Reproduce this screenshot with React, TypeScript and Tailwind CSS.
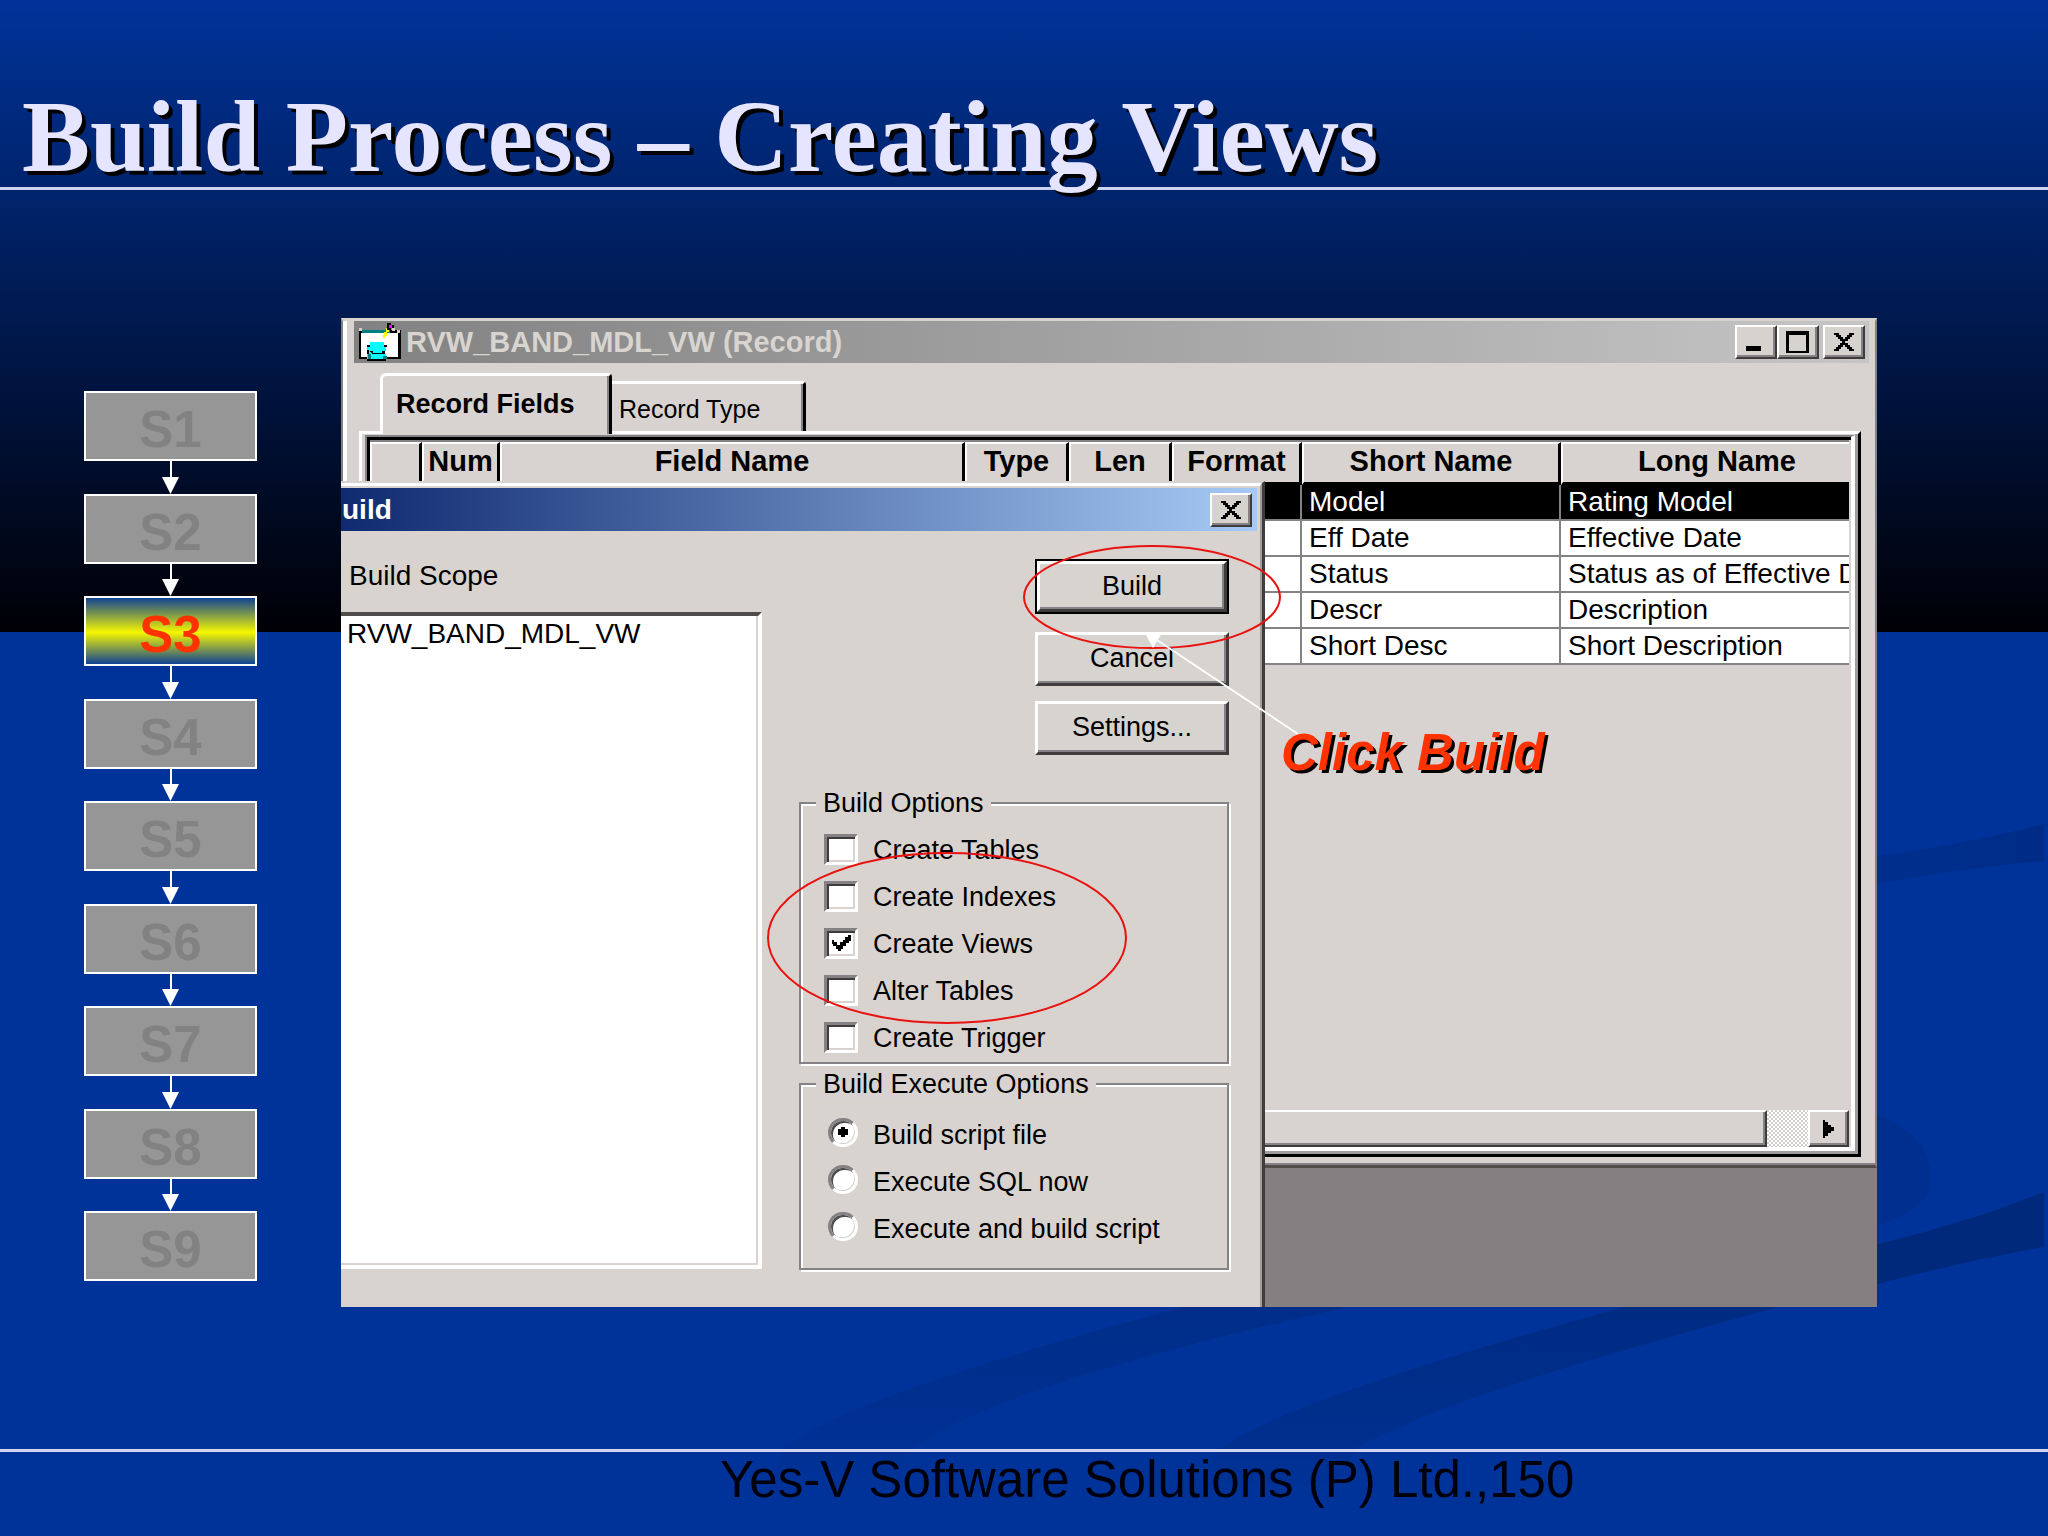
import React from "react";

const STEPS = ["S1", "S2", "S3", "S4", "S5", "S6", "S7", "S8", "S9"];
const ACTIVE = "S3";

const HEADERS = ["", "Num", "Field Name", "Type", "Len", "Format", "Short Name", "Long Name"];

const ROWS = [
  { short: "Model", long: "Rating Model", selected: true },
  { short: "Eff Date", long: "Effective Date", selected: false },
  { short: "Status", long: "Status as of Effective D", selected: false },
  { short: "Descr", long: "Description", selected: false },
  { short: "Short Desc", long: "Short Description", selected: false },
];

const BUILD_OPTIONS = [
  { label: "Create Tables", checked: false },
  { label: "Create Indexes", checked: false },
  { label: "Create Views", checked: true },
  { label: "Alter Tables", checked: false },
  { label: "Create Trigger", checked: false },
];

const EXECUTE_OPTIONS = [
  { label: "Build script file", checked: true },
  { label: "Execute SQL now", checked: false },
  { label: "Execute and build script", checked: false },
];

function Swooshes() {
  return (
    <svg className="absolute inset-0 h-full w-full" viewBox="0 0 2048 1536" preserveAspectRatio="none" aria-hidden="true">
      <defs>
        <linearGradient id="fadeA" x1="0" y1="1300" x2="0" y2="1530" gradientUnits="userSpaceOnUse">
          <stop offset="0" stopColor="#002d88" />
          <stop offset="0.6" stopColor="#003093" />
          <stop offset="0.85" stopColor="#003399" />
        </linearGradient>
        <linearGradient id="fadeB" x1="0" y1="1300" x2="0" y2="1530" gradientUnits="userSpaceOnUse">
          <stop offset="0" stopColor="#002b82" />
          <stop offset="0.6" stopColor="#002f8e" />
          <stop offset="0.85" stopColor="#003399" />
        </linearGradient>
        <linearGradient id="fadeC" x1="1860" y1="0" x2="2044" y2="0" gradientUnits="userSpaceOnUse">
          <stop offset="0" stopColor="#002f90" />
          <stop offset="1" stopColor="#002c86" />
        </linearGradient>
      </defs>
      <path d="M1860 858 Q1960 846 2044 824 V861 Q1960 868 1860 888 Z" fill="url(#fadeC)" />
      <path d="M1870 1112 C1910 1124 1931 1150 1931 1178 C1931 1202 1908 1216 1870 1228 Z" fill="#002f90" />
      <path d="M1870 1246 Q1970 1222 2044 1192 V1247 Q1960 1262 1870 1286 Z" fill="#00297c" />
      <path d="M1210 1300 C1080 1334 840 1400 784 1448 C770 1470 770 1500 760 1536 H890 C890 1500 895 1470 914 1448 C980 1400 1150 1350 1380 1300 Z" fill="url(#fadeA)" />
      <path d="M1650 1300 C1510 1338 1290 1400 1221 1448 C1200 1475 1200 1500 1190 1536 H1330 C1330 1500 1335 1475 1358 1448 C1430 1405 1600 1355 1805 1300 Z" fill="url(#fadeB)" />
    </svg>
  );
}

function StepChain() {
  return (
    <ol className="mt-[201px] flex h-[890px] w-[173px] shrink-0 flex-col items-center">
      {STEPS.map((step, i) => (
        <React.Fragment key={step}>
          {i > 0 && (
            <li className="flex w-4 flex-1 flex-col items-center" aria-hidden="true">
              <span className="w-[2px] flex-1 bg-white" />
              <svg width="17" height="17" viewBox="0 0 17 17" className="block shrink-0">
                <path d="M0 0H17L8.5 17Z" fill="#fff" />
              </svg>
            </li>
          )}
          <li
            className={
              step === ACTIVE
                ? "flex h-[70px] w-full shrink-0 items-center justify-center border-2 border-white bg-[linear-gradient(#0f4392,#f6f600_52%,#0f4392)] pt-[8px] text-[51px] leading-[56px] font-bold text-[#ff3300]"
                : "flex h-[70px] w-full shrink-0 items-center justify-center border-2 border-white bg-[#979697] pt-[8px] text-[51px] leading-[56px] font-bold text-[#838283]"
            }
          >
            {step}
          </li>
        </React.Fragment>
      ))}
    </ol>
  );
}

function RecordIcon() {
  return (
    <svg width="43" height="38" viewBox="0 0 43 38" className="shrink-0" shapeRendering="crispEdges" aria-hidden="true">
      <rect x="0" y="7" width="42" height="29" fill="#000" />
      <rect x="2" y="10" width="37" height="24" fill="#fff" />
      <rect x="3" y="7" width="28" height="3" fill="#008080" />
      <path d="M0 5h3v3H0zM33 5h3v3h-3zM38 7h3v3h-3z" fill="#d4d0c8" />
      <path d="M11 19h14v3h2v6h-2v3h2v5H8v-5h2v-3H8v-6h3z" fill="#00ffff" />
      <path d="M8 22h3v2H8zM25 22h3v2h-3zM11 28h3v2h9v-2h3v3H13zM8 36h19v2H8zM8 27h2v4H8z" fill="#000" />
      <path d="M9 31h3v5H9zM24 33h4v3h-4z" fill="#008080" />
      <path d="M27 5h3v4h-3zM25 9h3v4h-3zM24 12h2v3h-2z" fill="#ffff00" />
      <path d="M28 0h4v2h3v3h-3v2h-4z" fill="#000" />
      <rect x="30" y="2" width="3" height="3" fill="#ff00ff" />
    </svg>
  );
}

function CaptionButton({ label, children }: { label: string; children: React.ReactNode }) {
  return (
    <button
      type="button"
      aria-label={label}
      className="flex h-[34px] w-[42px] shrink-0 items-center justify-center border-2 border-t-white border-r-[#403c3c] border-b-[#403c3c] border-l-white bg-[#d6d2ce] shadow-[inset_-2px_-2px_#848284]"
    >
      <svg width="24" height="22" viewBox="0 0 24 22" shapeRendering="crispEdges" aria-hidden="true">
        {children}
      </svg>
    </button>
  );
}

function CrossGlyph() {
  return (
    <path
      d="M2 2h5v2h2v2h2v2h2v-2h2v-2h2v-2h5v2h-2v2h-2v2h-2v2h-3v2h3v2h2v2h2v2h2v2h-5v-2h-2v-2h-2v-2h-2v2h-2v2h-2v2h-5v-2h2v-2h2v-2h2v-2h2v-2h-2v-2h-2v-2h-2v-2h-2z"
      fill="#000"
    />
  );
}

function RecordWindow() {
  return (
    <section className="flex h-[850px] w-full flex-col border-t-[3px] border-r-2 border-b-[3px] border-l-2 border-t-[#d6d2ce] border-r-[#848284] border-b-[#504c4c] border-l-[#848284] bg-[#d8d3d0]">
      <div className="flex min-h-0 flex-1 flex-col border-b-2 border-b-[#848284] pr-[6px]">
        <div className="flex min-h-0 flex-1 flex-col border-l-[4px] border-l-white pl-[7px]">
          <div className="flex h-[42px] shrink-0 items-center bg-[linear-gradient(90deg,#828282,#c6c5c5)] pl-[5px]">
            <RecordIcon />
            <h2 className="ml-[4px] flex-1 text-[29px] leading-[34px] font-bold whitespace-nowrap text-[#d8d4d0]">
              RVW_BAND_MDL_VW (Record)
            </h2>
            <div className="mr-[4px] flex">
              <CaptionButton label="Minimize">
                <rect x="2" y="15" width="15" height="5" fill="#000" />
              </CaptionButton>
              <CaptionButton label="Maximize">
                <path d="M0 0h23v22H0zM3 4v16h17V4z" fillRule="evenodd" fill="#000" />
              </CaptionButton>
              <span className="w-[4px]" />
              <CaptionButton label="Close">
                <CrossGlyph />
              </CaptionButton>
            </div>
          </div>

          <div role="tablist" className="flex h-[68px] shrink-0 items-end pl-[26px]">
            <button
              type="button"
              role="tab"
              aria-selected="true"
              className="relative -mb-[3px] h-[61px] w-[232px] rounded-tl-md rounded-tr-sm border-t-[3px] border-r-[3px] border-l-[3px] border-t-white border-r-black border-l-white bg-[#d8d3d0] pb-[3px] pl-[13px] text-left text-[27px] leading-[32px] font-bold whitespace-nowrap text-black shadow-[inset_-2px_0_#848284]"
            >
              Record Fields
            </button>
            <button
              type="button"
              role="tab"
              aria-selected="false"
              className="h-[50px] w-[194px] rounded-tr-sm border-t-[3px] border-r-[3px] border-t-white border-r-black bg-[#d8d3d0] pt-[3px] pl-[7px] text-left text-[25px] leading-[30px] whitespace-nowrap text-black shadow-[inset_-2px_0_#848284]"
            >
              Record Type
            </button>
          </div>

          <div className="mr-[8px] mb-[6px] ml-[5px] flex min-h-0 flex-1 flex-col border-[3px] border-t-white border-r-black border-b-black border-l-white">
            <div className="flex min-h-0 flex-1 flex-col border-r-[3px] border-b-[3px] border-r-[#a09c9c] border-b-[#a09c9c] pt-px pl-[3px]">
              <div className="flex min-h-0 flex-1 flex-col border-t-2 border-r-[4px] border-b-[4px] border-l-2 border-t-[#848284] border-r-white border-b-white border-l-[#848284]">
                <div className="flex min-h-0 flex-1 flex-col border-t-[3px] border-l-[3px] border-black pr-[2px]">
                  <table className="w-full table-fixed border-separate border-spacing-0 border-t-2 border-t-[#848284] text-black">
                    <colgroup>
                      <col className="w-[52px]" />
                      <col className="w-[78px]" />
                      <col className="w-[465px]" />
                      <col className="w-[104px]" />
                      <col className="w-[103px]" />
                      <col className="w-[130px]" />
                      <col className="w-[259px]" />
                      <col />
                    </colgroup>
                    <thead>
                      <tr>
                        {HEADERS.map((h) => (
                          <th
                            key={h}
                            scope="col"
                            className="h-[43px] overflow-hidden border-t-2 border-r-[3px] border-b-[3px] border-l-2 border-t-white border-r-black border-b-black border-l-white p-0 pb-[4px] text-center text-[29px] leading-[34px] font-bold whitespace-nowrap last:border-r-0 last:pl-[22px]"
                          >
                            {h}
                          </th>
                        ))}
                      </tr>
                    </thead>
                    <tbody>
                      {ROWS.map((row) => (
                        <tr key={row.short} className={row.selected ? "bg-black text-white" : "bg-white text-black"}>
                          {[0, 1, 2, 3, 4, 5].map((c) => (
                            <td key={c} className="h-[36px] border-r-2 border-b-2 border-[#848284] p-0" />
                          ))}
                          <td className="h-[36px] overflow-hidden border-r-2 border-b-2 border-[#848284] p-0 pl-[7px] text-[28px] leading-[34px] whitespace-nowrap">
                            {row.short}
                          </td>
                          <td className="h-[36px] overflow-hidden border-b-2 border-[#848284] p-0 pl-[7px] text-[28px] leading-[34px] whitespace-nowrap">
                            {row.long}
                          </td>
                        </tr>
                      ))}
                    </tbody>
                  </table>
                  <div className="flex-1" />
                  <div className="flex h-[37px] shrink-0">
                    <div className="flex-1 border-2 border-t-white border-r-[#403c3c] border-b-[#403c3c] border-l-white shadow-[inset_-2px_-2px_#848284]" />
                    <div className="w-[41px] bg-[repeating-conic-gradient(#ffffff_0_25%,#d4cfcc_0_50%)] bg-[length:4px_4px]" />
                    <button
                      type="button"
                      aria-label="Scroll right"
                      className="flex w-[41px] items-center justify-center border-2 border-t-white border-r-[#403c3c] border-b-[#403c3c] border-l-white shadow-[inset_-2px_-2px_#848284]"
                    >
                      <svg width="11" height="18" viewBox="0 0 11 18" shapeRendering="crispEdges" aria-hidden="true">
                        <path d="M0 0h2v2h3v3h3v2h3v4h-3v2h-3v3h-3v2h-2z" fill="#000" />
                      </svg>
                    </button>
                  </div>
                </div>
              </div>
            </div>
          </div>
        </div>
      </div>
    </section>
  );
}

function CheckOption({ label, checked }: { label: string; checked: boolean }) {
  return (
    <label className="flex h-[47px] items-center gap-[15px] text-[27px] leading-[32px] whitespace-nowrap">
      <span className="relative flex h-[31px] w-[34px] shrink-0">
        <input
          type="checkbox"
          defaultChecked={checked}
          className="peer h-full w-full appearance-none border-[3px] border-t-[#848284] border-r-white border-b-white border-l-[#848284] bg-white shadow-[inset_2px_2px_#403c3c,inset_-2px_-2px_#d8d3d0]"
        />
        <svg
          className="pointer-events-none absolute top-[7px] left-[8px] hidden peer-checked:block"
          width="19"
          height="18"
          viewBox="0 0 19 18"
          shapeRendering="crispEdges"
          aria-hidden="true"
        >
          <path d="M0 5h2v2h3v3h3v-3h3v-2h2v-3h3v-2h3v6h-2v2h-3v3h-3v3h-2v2h-3v-2h-2v-3h-3v-2h-3z" fill="#000" />
        </svg>
      </span>
      {label}
    </label>
  );
}

function RadioOption({ label, checked }: { label: string; checked: boolean }) {
  return (
    <label className="flex h-[47px] items-center gap-[15px] pl-[4px] text-[27px] leading-[32px] whitespace-nowrap">
      <span className="flex h-[34px] w-[30px] shrink-0 items-start justify-center">
        <span className="relative flex h-[29px] w-[30px] items-center justify-center">
          <input
            type="radio"
            name="execute"
            defaultChecked={checked}
            className="peer h-full w-full appearance-none rounded-full border-[3px] border-t-[#848284] border-r-white border-b-white border-l-[#848284] bg-white shadow-[inset_2px_2px_#504c4c,inset_-1px_-1px_#d8d3d0]"
          />
          <svg className="pointer-events-none absolute hidden peer-checked:block" width="10" height="10" viewBox="0 0 10 10" aria-hidden="true">
            <path d="M3 0h4v2h3v6H7v2H3V8H0V2h3z" fill="#000" />
          </svg>
        </span>
      </span>
      {label}
    </label>
  );
}

function DialogButton({ children, primary = false }: { children: React.ReactNode; primary?: boolean }) {
  return (
    <div className={primary ? "h-[55px] border-2 border-black" : "h-[54px]"}>
      <button
        type="button"
        className="h-full w-full border-[3px] border-t-white border-r-[#403c3c] border-b-[#403c3c] border-l-white bg-[#d7d3cf] pb-[2px] text-[27px] leading-[32px] text-black shadow-[inset_-2px_-2px_#848284]"
      >
        {children}
      </button>
    </div>
  );
}

function BuildDialog() {
  return (
    <section className="absolute top-[163px] bottom-0 left-0 flex w-[924px] flex-col border-t-2 border-r-[3px] border-t-[#d8d3d0] border-r-[#403c3c] bg-[#d9d3d0]">
      <div className="flex min-h-0 flex-1 flex-col border-t-[3px] border-r-2 border-t-white border-r-[#a09c9c]">
        <div className="mt-[2px] mr-[3px] flex h-[43px] shrink-0 items-center bg-[linear-gradient(90deg,#0f2a70,#a6caf5)]">
          <h2 className="flex-1 pl-px text-[28px] leading-[34px] font-bold text-white">uild</h2>
          <div className="mr-[5px] flex">
            <CaptionButton label="Close dialog">
              <CrossGlyph />
            </CaptionButton>
          </div>
        </div>

        <div className="flex min-h-0 flex-1 pr-[31px]">
          <div className="flex w-[421px] flex-col pt-[29px]">
            <h3 id="scope-label" className="pl-[8px] text-[28px] leading-[32px]">
              Build Scope
            </h3>
            <ul
              aria-labelledby="scope-label"
              className="mt-[20px] h-[657px] border-t-[4px] border-r-[4px] border-b-[4px] border-t-[#504c4c] border-r-white border-b-white bg-white pl-[6px] text-[28px] leading-[36px] shadow-[inset_-2px_-2px_#d8d3d0]"
            >
              <li>RVW_BAND_MDL_VW</li>
            </ul>
          </div>

          <div className="ml-[37px] flex flex-1 flex-col">
            <div className="flex w-[194px] flex-col self-end pt-[28px]">
              <DialogButton primary>Build</DialogButton>
              <div className="h-[18px]" />
              <DialogButton>Cancel</DialogButton>
              <div className="h-[15px]" />
              <DialogButton>Settings...</DialogButton>
            </div>

            <fieldset className="mt-[32px] h-[277px] border-2 border-[#848284] pl-[23px] shadow-[2px_2px_#fff,inset_2px_2px_#fff]">
              <legend className="-ml-[8px] bg-[#d9d3d0] px-[7px] text-[27px] leading-[32px]">Build Options</legend>
              <div className="pt-[7px]">
                {BUILD_OPTIONS.map((o) => (
                  <CheckOption key={o.label} {...o} />
                ))}
              </div>
            </fieldset>

            <fieldset className="mt-[4px] h-[202px] border-2 border-[#848284] pl-[23px] shadow-[2px_2px_#fff,inset_2px_2px_#fff]">
              <legend className="-ml-[8px] bg-[#d8d3d0] px-[7px] text-[27px] leading-[32px]">Build Execute Options</legend>
              <div className="pt-[11px]">
                {EXECUTE_OPTIONS.map((o) => (
                  <RadioOption key={o.label} {...o} />
                ))}
              </div>
            </fieldset>
          </div>
        </div>
      </div>
    </section>
  );
}

function Annotations() {
  return (
    <div className="pointer-events-none absolute inset-0">
      <svg className="absolute top-0 left-0" width="1300" height="800" viewBox="0 0 1300 800" aria-hidden="true">
        <ellipse cx="811" cy="279" rx="128" ry="51" fill="none" stroke="#e8120f" strokeWidth="2" />
        <ellipse cx="606" cy="620" rx="179" ry="85" fill="none" stroke="#e8120f" strokeWidth="2" />
        <path d="M816 322L957 416" stroke="#fff" strokeWidth="2" />
        <path d="M804 315H821L812 330Z" fill="#fff" />
      </svg>
      <p className="absolute top-[407px] left-[940px] text-[51px] leading-[56px] font-bold whitespace-nowrap text-[#ff3300] italic [text-shadow:3px_3px_0_#000]">
        Click Build
      </p>
    </div>
  );
}

export default function App() {
  return (
    <div className="relative flex min-h-screen flex-col overflow-hidden bg-[#003399] font-['Liberation_Sans',Arial,sans-serif]">
      <div className="absolute inset-x-0 top-0 h-[632px] bg-[linear-gradient(#003399,#000005)]" />
      <Swooshes />

      <header className="relative h-[190px] border-b-[3px] border-[#cdd6ee] pt-[84px] pl-[22px]">
        <h1 className="font-['Liberation_Serif',serif] text-[102px] leading-[105px] font-bold whitespace-nowrap text-[#e5e5ff] [text-shadow:4px_4px_0_#000]">
          Build Process – Creating Views
        </h1>
      </header>

      <main className="relative flex flex-1 items-start gap-[84px] pr-[171px] pl-[84px]">
        <StepChain />
        <div className="relative mt-[128px] h-[989px] flex-1 overflow-hidden bg-[#848082]">
          <RecordWindow />
          <BuildDialog />
          <Annotations />
        </div>
      </main>

      <footer className="relative h-[87px] border-t-[3px] border-[#cdd6ee] pl-[720px]">
        <p className="text-[51px] leading-[56px] whitespace-nowrap text-[#00000c]">Yes-V Software Solutions (P) Ltd.,150</p>
      </footer>
    </div>
  );
}
